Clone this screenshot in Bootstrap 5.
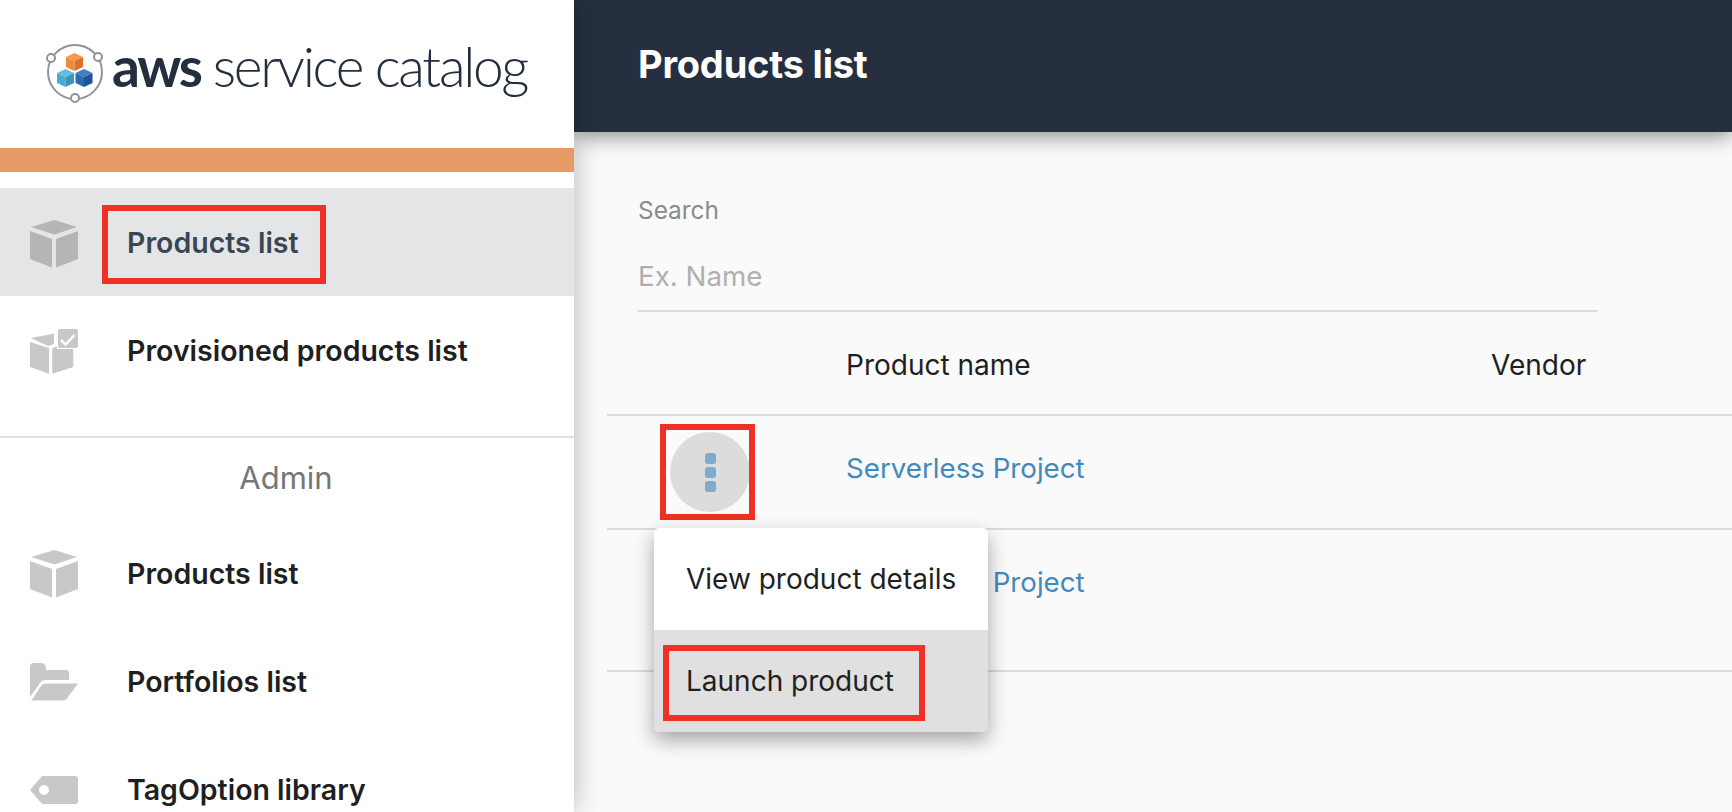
<!DOCTYPE html>
<html lang="en">
<head>
  <meta charset="UTF-8" />
  <title>AWS Service Catalog - Products list</title>
  <link href="https://cdn.jsdelivr.net/npm/bootstrap@5.3.0/dist/css/bootstrap.min.css" rel="stylesheet" />
  <style>
    html, body { height: 100%; }
    body { font-family: Inter, Roboto, sans-serif; overflow: hidden; background: #fafafa; color: #1f1f1f; }
    .app-shell { height: 812px; overflow: hidden; }

    .side-bar { width: 574px; flex: none; background: #fff; box-shadow: 0 0 26px rgba(0,0,0,.28); z-index: 3; position: relative; }
    .brand-box { height: 148px; flex: none; padding: 41px 0 0 44px; gap: 6px; }
    .brand-name { font-family: Lato, sans-serif; font-size: 55px; line-height: 58px; color: #232f3e; letter-spacing: -2.3px; white-space: nowrap; margin-top: -4px; }
    .brand-name b { font-weight: 700; margin-right: 12px; }
    .brand-name span { font-weight: 300; }
    .accent-strip { height: 24px; flex: none; background: #e89a66; margin-bottom: 16px; }

    .side-link { height: 108px; flex: none; padding-left: 30px; font-size: 28.5px; font-weight: 600; color: #1f1f1f; text-decoration: none; }
    .side-link:hover { color: #1f1f1f; }
    .side-link.upper { padding-top: 3px; }
    .side-link.current { background: #e4e5e7; color: #3c4552; }
    .side-link .icon-slot { width: 48px; margin-right: 49px; flex: none; fill: #c8c8c8; }
    .side-link.current .icon-slot { fill: #b5b5b5; }
    .side-rule { margin: 32px 0 0; border: 0; border-top: 2px solid #e0e0e0; opacity: 1; }
    .side-title { height: 82px; font-size: 31px; font-weight: 400; color: #767676; padding: 17px 2px 0 0; text-align: center; }

    .callout { position: relative; }
    .callout::after { content: ""; position: absolute; border: 6px solid #ee3124; pointer-events: none; }
    .callout-nav::after { left: -25px; right: -27px; top: -17px; bottom: -19px; }
    .callout-more::after { left: -10px; right: -5px; top: -8px; bottom: -8px; }
    .callout-launch::after { left: 9px; top: 15px; width: 262px; height: 76px; }

    .main-pane { min-width: 0; }
    .top-bar { height: 132px; background: #252f3f; color: #fff; padding: 0 0 3px 64px; box-shadow: 0 4px 20px rgba(0,0,0,.45); z-index: 2; position: relative; }
    .top-bar h1 { font-size: 38px; font-weight: 700; margin: 0; letter-spacing: -.2px; }

    .search-box { padding: 63px 0 0 64px; width: 1024px; }
    .search-box label { font-size: 24.4px; color: #8b8b8b; margin: 0 0 33px; line-height: 30px; display: block; }
    .search-box input { border: 0; border-bottom: 2px solid #dcdcdc; border-radius: 0; background: transparent; padding: 0 0 16px; font-size: 27.7px; line-height: 36px; box-shadow: none; }
    .search-box input::placeholder { color: #b0b0b0; }

    .prod-table { margin: 0 0 0 33px; width: 1125px; table-layout: fixed; font-size: 27.7px; --bs-table-bg: transparent; }
    .prod-table th, .prod-table td { border-bottom: 2px solid #dcdcdc; padding: 0; vertical-align: middle; font-weight: 400; color: #1f1f1f; }
    .prod-table thead th { height: 103px; padding-top: 3px; font-size: 28px; }
    .prod-table .first-row td { height: 114px; padding-bottom: 7px; }
    .prod-table .second-row td { height: 142px; vertical-align: top; padding-top: 32px; }
    .prod-table td a { color: #4289bd; text-decoration: none; }
    .prod-table td.more-cell { padding: 0 0 0 63px; }

    .more-wrap { width: 80px; }
    .more-btn { width: 80px; height: 80px; border-radius: 50%; background: #dcdcdc; border: 0; padding: 0; gap: 3px; }
    .more-btn i { width: 11px; height: 11px; border-radius: 3px; background: #7fabcd; display: block; }

    .row-menu { position: absolute; left: 80px; top: 216px; width: 334px; margin: 0; padding: 0; border: 0; border-radius: 5px; overflow: hidden; box-shadow: 0 8px 20px rgba(0,0,0,.35); display: block; z-index: 4; font-size: 28px; }
    .row-menu .dropdown-item { height: 102px; padding: 0 0 0 32px; display: flex; align-items: center; color: #1f1f1f; }
    .row-menu .dropdown-item.active, .row-menu .dropdown-item:active { background: #e0e0e0; color: #1f1f1f; }
    .menu-anchor { position: relative; }
  </style>
</head>
<body>
<div class="app-shell d-flex">

  <aside class="side-bar d-flex flex-column">
    <div class="brand-box d-flex align-items-start">
      <svg width="62" height="64" viewBox="44 40 62 64">
        <circle cx="75" cy="71" r="27" fill="none" stroke="#8e9499" stroke-width="2"/>
        <circle cx="51" cy="57" r="4" fill="#fff" stroke="#8e9499" stroke-width="2"/>
        <circle cx="98" cy="56" r="4" fill="#fff" stroke="#8e9499" stroke-width="2"/>
        <circle cx="75" cy="97" r="4" fill="#fff" stroke="#8e9499" stroke-width="2"/>
        <path fill="#f59a4c" d="M74.500 52l8.500 4-8.500 4-8.500-4z"/><path fill="#ef8a35" d="M66 56l8.500 4v10L66 66z"/><path fill="#d9702c" d="M83 56l-8.500 4v10l8.500-4z"/>
        <path fill="#62bfdc" d="M65.500 68l8.500 4-8.500 4-8.500-4z"/><path fill="#47acd2" d="M57 72l8.500 4v10L57 82z"/><path fill="#3a93bb" d="M74 72l-8.500 4v10l8.500-4z"/>
        <path fill="#3f7fc1" d="M84 68l8.500 4-8.500 4-8.500-4z"/><path fill="#2d69ad" d="M75.500 72l8.500 4v10l-8.500-4z"/><path fill="#1f5398" d="M92.500 72L84 76v10l8.500-4z"/>
      </svg>
      <div class="brand-name"><b>aws</b><span>service catalog</span></div>
    </div>
    <div class="accent-strip"></div>

    <nav class="d-flex flex-column">
      <a href="#" class="side-link upper current d-flex align-items-center">
        <svg class="icon-slot" width="48" height="48" viewBox="0 0 48 48"><path d="M24.500 0L47 7l-22.500 7.500L1 7z"/><path d="M0 11l22 8v28.500L0 39z"/><path d="M26 19l22-8v28l-22 8.500z"/></svg>
        <span class="callout callout-nav">Products list</span>
      </a>
      <a href="#" class="side-link upper d-flex align-items-center">
        <svg class="icon-slot" width="48" height="46" viewBox="0 0 48 46"><path d="M1 9l23-4.500V15l-6 2z"/><path d="M0 13l19 6v25.700L0 38z"/><path d="M22.300 19L27 17.500V20h16.300v18l-21 6.700z"/><rect x="28" y="0" width="20" height="19" rx="2"/><path d="M31 11l4.700 4.500L44.500 6" fill="none" stroke="#fff" stroke-width="2.500"/></svg>
        <span>Provisioned products list</span>
      </a>
      <hr class="side-rule">
      <div class="side-title">Admin</div>
      <a href="#" class="side-link d-flex align-items-center">
        <svg class="icon-slot" width="48" height="48" viewBox="0 0 48 48"><path d="M24.500 0L47 7l-22.500 7.500L1 7z"/><path d="M0 11l22 8v28.500L0 39z"/><path d="M26 19l22-8v28l-22 8.500z"/></svg>
        <span>Products list</span>
      </a>
      <a href="#" class="side-link d-flex align-items-center">
        <svg class="icon-slot" width="48" height="38" viewBox="0 0 48 38"><path d="M0 4a4 4 0 0 1 4-4h7a5 5 0 0 1 5 5v2h20a3 3 0 0 1 3 3v7H15a6 6 0 0 0-5 3L0 34z"/><path d="M15 20.500h33L38 34a6 6 0 0 1-5 3.500H1.500L11 23a5 5 0 0 1 4-2.500z"/></svg>
        <span>Portfolios list</span>
      </a>
      <a href="#" class="side-link d-flex align-items-center">
        <svg class="icon-slot" width="48" height="28" viewBox="0 0 48 28"><path fill-rule="evenodd" d="M12 0h33a3 3 0 0 1 3 3v22a3 3 0 0 1-3 3H12L0 14zm2 9a5 5 0 1 0 0 10 5 5 0 0 0 0-10z"/></svg>
        <span>TagOption library</span>
      </a>
    </nav>
  </aside>

  <main class="main-pane flex-grow-1">
    <header class="top-bar d-flex align-items-center"><h1>Products list</h1></header>

    <div class="search-box">
      <label for="searchInput">Search</label>
      <input id="searchInput" class="form-control" type="text" placeholder="Ex. Name">
    </div>

    <div class="menu-anchor">
      <table class="table prod-table">
        <colgroup><col style="width:239px"><col style="width:645px"><col></colgroup>
        <thead>
          <tr><th></th><th>Product name</th><th>Vendor</th></tr>
        </thead>
        <tbody>
          <tr class="first-row">
            <td class="more-cell">
              <div class="callout callout-more more-wrap">
                <button class="more-btn d-flex flex-column align-items-center justify-content-center" type="button" aria-label="More"><i></i><i></i><i></i></button>
              </div>
            </td>
            <td><a href="#">Serverless Project</a></td>
            <td></td>
          </tr>
          <tr class="second-row">
            <td></td>
            <td><a href="#">Serverless Project</a></td>
            <td></td>
          </tr>
        </tbody>
      </table>

      <div class="dropdown-menu show row-menu">
        <a class="dropdown-item" href="#">View product details</a>
        <a class="dropdown-item active callout callout-launch" href="#">Launch product</a>
      </div>
    </div>
  </main>
</div>
<script src="https://cdn.jsdelivr.net/npm/bootstrap@5.3.0/dist/js/bootstrap.bundle.min.js"></script>
</body>
</html>
